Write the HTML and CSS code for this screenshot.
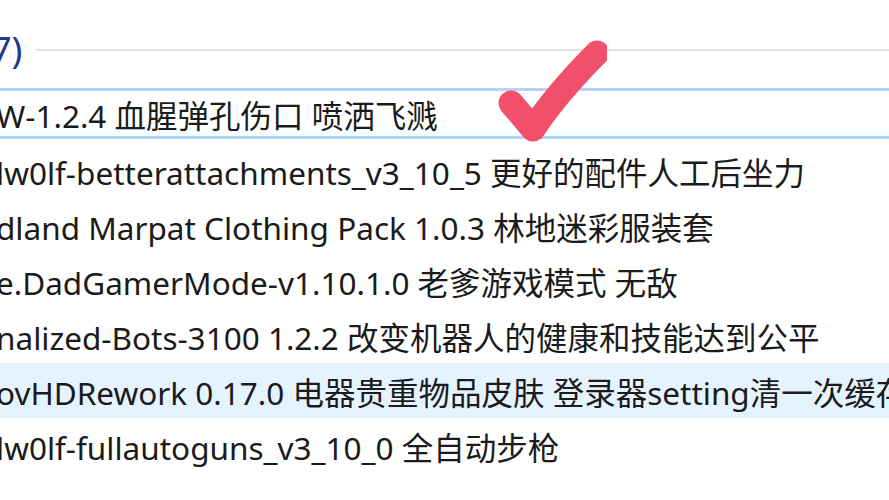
FILE: index.html
```html
<!DOCTYPE html>
<html lang="zh">
<head>
<meta charset="utf-8">
<link rel="stylesheet" href="styles.css">
</head>
<body>
<div class="view">
  <div class="group">
    <span class="group-title">7)</span>
    <span class="group-line"></span>
  </div>
  <ul class="list">
    <li class="row selected"><span class="name">W-1.2.4 血腥弹孔伤口 喷洒飞溅</span></li>
    <li class="row"><span class="name">lw0lf-betterattachments_v3_10_5 更好的配件人工后坐力</span></li>
    <li class="row"><span class="name">dland Marpat Clothing Pack 1.0.3 林地迷彩服装套</span></li>
    <li class="row"><span class="name">e.DadGamerMode-v1.10.1.0 老爹游戏模式 无敌</span></li>
    <li class="row"><span class="name">nalized-Bots-3100 1.2.2 改变机器人的健康和技能达到公平</span></li>
    <li class="row hover"><span class="name">ovHDRework 0.17.0 电器贵重物品皮肤 登录器setting清一次缓存</span></li>
    <li class="row"><span class="name">lw0lf-fullautoguns_v3_10_0 全自动步枪</span></li>
  </ul>
  <svg class="check" viewBox="0 0 120 110" width="120" height="110">
    <path d="M24 68 Q36 82 46 94 Q70 58 110 18" fill="none" stroke="#f24f6a" stroke-width="25" stroke-linecap="round" stroke-linejoin="round"/>
  </svg>
</div>
</body>
</html>
```
FILE: styles.css
```css
html, body {
  margin: 0;
  padding: 0;
  background: #ffffff;
}
.view {
  position: relative;
  width: 889px;
  height: 500px;
  overflow: hidden;
  font-family: "Noto Sans", "Noto Sans CJK SC", sans-serif;
  color: #1b1b1b;
}
.group {
  display: flex;
  align-items: center;
  height: 60px;
  padding-top: 20px;
  margin-left: -9px;
}
.group-title {
  font-size: 36px;
  line-height: 40px;
  color: #233a8c;
  font-weight: 400;
}
.group-line {
  flex: 1;
  height: 2px;
  background: #e3e3e3;
  margin-left: 14px;
}
.list {
  list-style: none;
  margin: 8px 0 0 -4px;
  padding: 0;
}
.row {
  height: 55px;
  display: flex;
  align-items: center;
  box-sizing: border-box;
  white-space: nowrap;
  font-size: 31.5px;
}
.row.selected {
  border-top: 3px solid #b3d4f2;
  border-bottom: 3px solid #b3d4f2;
  background: linear-gradient(#ffffff 80%, #f5fbff);
  height: 51px;
  margin-bottom: 4px;
}
.row.hover {
  background: #e5f3ff;
}
.check {
  position: absolute;
  left: 487px;
  top: 35px;
}
```
